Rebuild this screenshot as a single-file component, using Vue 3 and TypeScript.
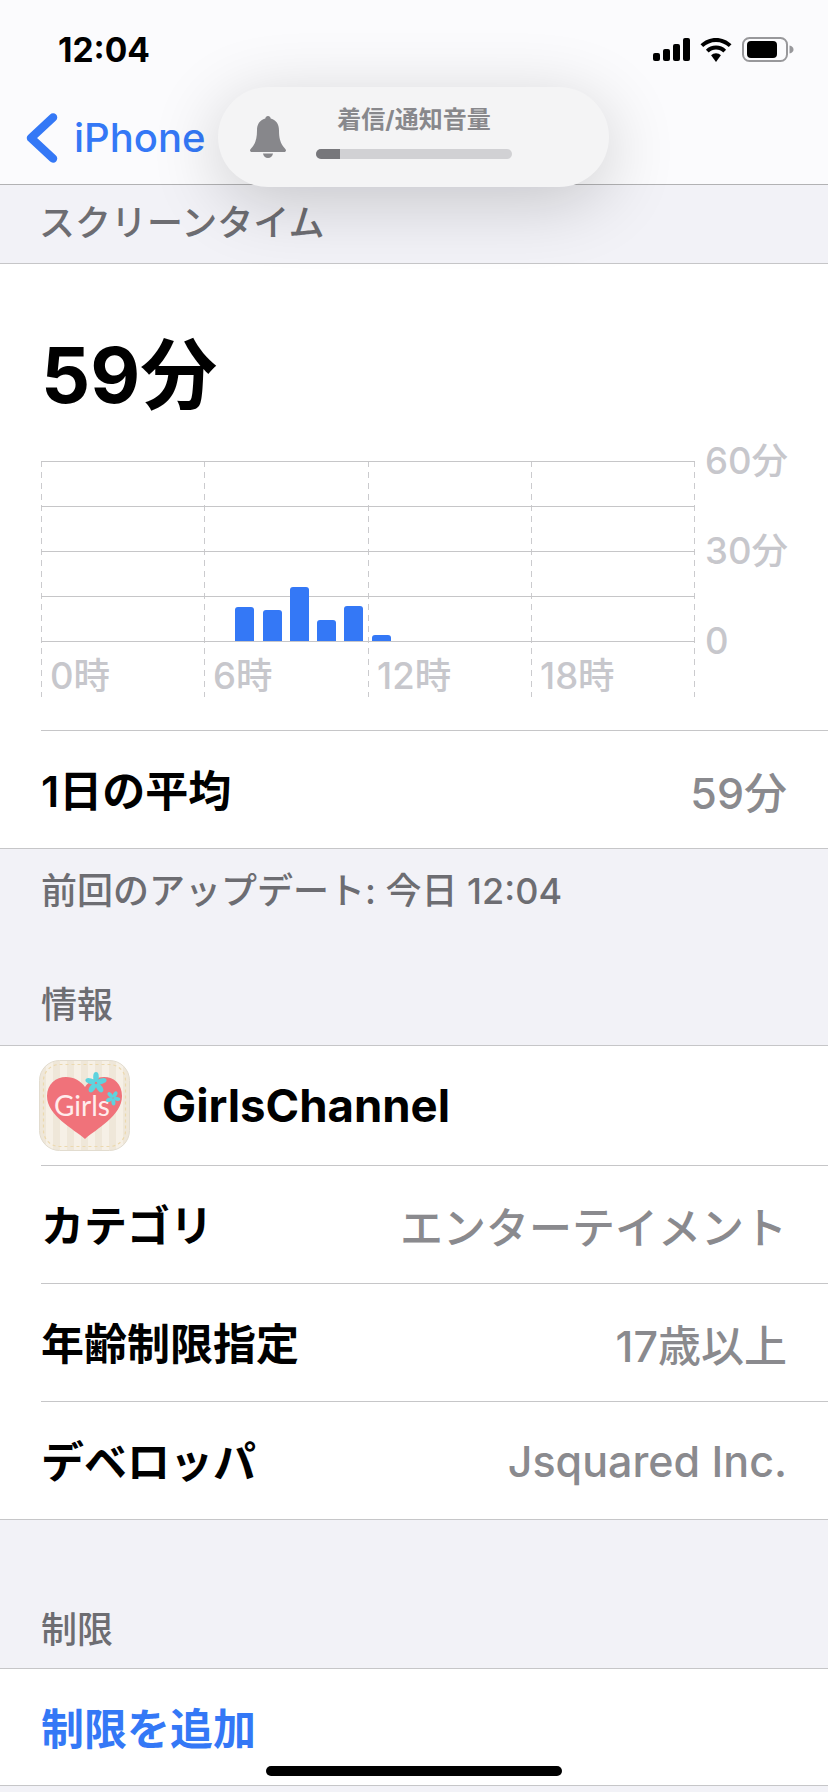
<script setup lang="ts">
const hours = ['0時', '6時', '12時', '18時']
const axis = ['60分', '30分', '0']
const gridY = [0.5, 45.5, 90.5, 135.5, 180.5]
const gridX = [0.5, 163.5, 327.5, 490.5, 653.5]
const bars = [
  { x: 194, top: 607 },
  { x: 222, top: 610 },
  { x: 249, top: 587 },
  { x: 276, top: 620 },
  { x: 303, top: 606 },
  { x: 331, top: 635 },
].map((b) => ({ x: b.x, y: b.top - 461, h: 641 - b.top }))

const infoRows = [
  { label: 'カテゴリ', value: 'エンターテイメント' },
  { label: '年齢制限指定', value: '17歳以上' },
  { label: 'デベロッパ', value: 'Jsquared Inc.' },
]
const barPath = (b: { x: number; y: number; h: number }) => {
  const r = Math.min(3, b.h)
  return `M${b.x} ${b.y + b.h}V${b.y + r}q0 -${r} ${r} -${r}h13q${r} 0 ${r} ${r}V${b.y + b.h}z`
}
</script>

<template>
  <div class="screen">
    <header class="top">
      <div class="status">
        <span class="time">12:04</span>
        <div class="status-icons">
          <svg width="37" height="23" viewBox="0 0 37 23">
            <rect x="0" y="15" width="7" height="8" rx="2" />
            <rect x="10" y="11" width="7" height="12" rx="2" />
            <rect x="20" y="6" width="7" height="17" rx="2" />
            <rect x="30" y="0" width="7" height="23" rx="2" />
          </svg>
          <svg width="32" height="24" viewBox="0 0 32 24">
            <path d="M16 0C10 0 4.600 2.400 0.500 6.300L3.200 9.100C6.600 5.900 11 3.900 16 3.900S25.400 5.900 28.800 9.100L31.500 6.300C27.400 2.400 22 0 16 0Z" />
            <path d="M16 7.600C12.100 7.600 8.600 9.100 5.900 11.700L8.700 14.500C10.600 12.700 13.200 11.600 16 11.600S21.400 12.700 23.300 14.500L26.100 11.700C23.400 9.100 19.900 7.600 16 7.600Z" />
            <path d="M16 15.200C14.100 15.200 12.400 15.900 11.100 17.200L16 24L20.900 17.200C19.600 15.900 17.900 15.200 16 15.200Z" />
          </svg>
          <svg width="52" height="25" viewBox="0 0 52 25">
            <rect x="1" y="1" width="44" height="23" rx="6.500" fill="none" stroke="#98989b" stroke-width="2" />
            <rect x="5" y="4" width="30" height="17" rx="4" />
            <path d="M47.500 8.500c2.500 .6 4 2 4 4s-1.500 3.400-4 4z" fill="#98989b" />
          </svg>
        </div>
      </div>
      <nav class="nav">
        <svg class="chevron" width="34" height="50" viewBox="0 0 34 50">
          <path d="M28 4.500L6 25L28 45.500" fill="none" stroke="#3478f6" stroke-width="8.500" stroke-linecap="round" stroke-linejoin="round" />
        </svg>
        <span class="back">iPhone</span>
      </nav>
    </header>

    <div class="hud">
      <svg class="bell" width="36" height="42" viewBox="0 0 36 42">
        <path d="M18 0c1.500 0 2.500 1 2.700 2.600C26.500 4 29 8.800 29 14.500c0 7 1.200 11.500 3.700 15.200 1.500 2.200 3.300 3.600 3.300 4.800 0 .9-.8 1.500-1.900 1.500H1.900C.8 36 0 35.400 0 34.500c0-1.200 1.800-2.600 3.300-4.800C5.800 26 7 21.500 7 14.500 7 8.800 9.500 4 15.300 2.600 15.500 1 16.500 0 18 0zM13 37.500h10c-.3 2.600-2.400 4.500-5 4.500s-4.700-1.900-5-4.500z" fill="#87878b" />
      </svg>
      <div class="hud-body">
        <span class="hud-title">着信/通知音量</span>
        <div class="hud-track"><div class="hud-fill"></div></div>
      </div>
    </div>

    <div class="band title-band"><span class="kana">スクリーンタイム</span></div>

    <section class="usage">
      <div class="total">59分</div>
      <div class="chart">
        <div class="plot">
          <svg class="plot-svg" width="654" height="236" viewBox="0 0 654 236">
            <line v-for="x in gridX" :key="x" :x1="x" :x2="x" y1="0" y2="236" stroke="#cbcbce" stroke-width="1" stroke-dasharray="6 5" />
            <line v-for="y in gridY" :key="y" x1="0" x2="654" :y1="y" :y2="y" stroke="#c6c6c8" stroke-width="1" />
            <path v-for="b in bars" :key="b.x" :d="barPath(b)" fill="#3478f6" />
          </svg>
          <div class="hours">
            <span v-for="h in hours" :key="h" class="hour">{{ h }}</span>
          </div>
        </div>
        <div class="axis">
          <span v-for="a in axis" :key="a">{{ a }}</span>
        </div>
      </div>
      <div class="row avg">
        <span class="label">1日の平均</span>
        <span class="value">59分</span>
      </div>
    </section>

    <div class="band updated">
      <span>前回のアップデート: 今日 12:04</span>
      <span class="info-title">情報</span>
    </div>

    <section class="list">
      <div class="row app">
        <svg class="app-icon" width="91" height="91" viewBox="0 0 91 91">
          <defs>
            <pattern id="stripes" width="14" height="10" patternUnits="userSpaceOnUse">
              <rect width="14" height="10" fill="#f6f0e6" />
              <rect width="7" height="10" fill="#efe7d9" />
            </pattern>
          </defs>
          <rect x="0.500" y="0.500" width="90" height="90" rx="20" fill="url(#stripes)" stroke="#e2dccf" />
          <rect x="4.500" y="4.500" width="82" height="82" rx="16" fill="none" stroke="#ecd9ae" stroke-width="1.200" stroke-dasharray="3 3" />
          <path d="M46 79C35 69 8 56 8 36C8 24 17 17 27 17C35 17 42 21 46 27C50 21 57 17 65 17C75 17 83 24 83 36C83 56 57 69 46 79Z" fill="#f0727a" />
          <text x="43" y="56" text-anchor="middle" class="girls">Girls</text>
          <g fill="#5ed3de">
            <ellipse v-for="r in [0, 72, 144, 216, 288]" :key="r" cx="57" cy="17" rx="2.800" ry="5" :transform="`rotate(${r} 57 23)`" />
            <ellipse v-for="r in [30, 102, 174, 246, 318]" :key="r" cx="74" cy="34" rx="2" ry="3.500" :transform="`rotate(${r} 74 38)`" />
          </g>
        </svg>
        <span class="app-name">GirlsChannel</span>
      </div>
      <div v-for="item in infoRows" :key="item.label" class="row">
        <span class="label">{{ item.label }}</span>
        <span class="value">{{ item.value }}</span>
      </div>
    </section>

    <div class="band limit-band">制限</div>

    <section class="list">
      <div class="row add">
        <span class="add-link">制限を追加</span>
      </div>
    </section>

    <div class="home"></div>
  </div>
</template>

<style scoped>
.screen {
  position: relative;
  width: 828px;
  height: 1792px;
  overflow: hidden;
  background: #f2f2f7;
  color: #000;
  font-family: Inter, "Noto Sans CJK JP", sans-serif;
}
.top {
  height: 184px;
  background: #fbfbfd;
  border-bottom: 1px solid #b2b2b4;
}
.status {
  height: 88px;
  padding: 30px 34px 0 58px;
  box-sizing: border-box;
  display: flex;
  justify-content: space-between;
  align-items: flex-start;
}
.time {
  font-size: 33.500px;
  line-height: 40px;
  font-weight: 700;
}
.status-icons {
  display: flex;
  align-items: center;
  gap: 10px;
  padding-top: 7px;
}
.nav {
  display: flex;
  align-items: center;
  height: 100px;
  padding: 0 0 0 25px;
  box-sizing: border-box;
}
.back {
  margin-left: 15px;
  font-size: 40px;
  font-weight: 500;
  color: #3478f6;
  line-height: 98px;
}
.hud {
  position: absolute;
  left: 218px;
  top: 87px;
  width: 391px;
  height: 100px;
  border-radius: 50px;
  background: #f4f4f5;
  box-shadow: 0 14px 70px rgba(0, 0, 0, 0.19);
  display: flex;
  align-items: flex-start;
}
.bell {
  margin: 29px 0 0 32px;
}
.hud-body {
  margin-left: 30px;
  width: 196px;
  display: flex;
  flex-direction: column;
  align-items: center;
}
.hud-title {
  margin-top: 17px;
  font-size: 24px;
  line-height: 32px;
  font-weight: 700;
  color: #88888c;
}
.hud-track {
  margin-top: 13px;
  width: 196px;
  height: 10px;
  border-radius: 5px;
  overflow: hidden;
  background: #d1d1d4;
}
.hud-fill {
  width: 24px;
  height: 100%;
  background: #77777b;
}
.band {
  padding: 0 41px;
  color: #6d6d72;
  font-size: 36px;
  font-weight: 500;
}
.title-band {
  height: 78px;
  line-height: 76px;
  border-bottom: 1px solid #c6c6c8;
}
.kana {
  margin-left: -2px;
}
.usage {
  background: #fff;
  padding-left: 41px;
  border-bottom: 1px solid #c6c6c8;
}
.total {
  padding-top: 66px;
  padding-bottom: 41px;
  font-size: 77px;
  line-height: 90px;
  font-weight: 700;
}
.chart {
  display: flex;
  height: 236px;
  margin-bottom: 33px;
}
.plot {
  width: 654px;
  display: grid;
}
.plot-svg,
.hours {
  grid-area: 1 / 1;
}
.plot-svg {
  display: block;
}
.hours {
  display: grid;
  grid-template-columns: 163px 164px 163px 164px;
  align-items: end;
  padding-bottom: 1px;
}
.hour {
  padding-left: 9px;
  font-size: 36.500px;
  line-height: 40px;
  font-weight: 500;
  color: #c7c7cc;
}
.axis {
  margin: -20px 0 0 10px;
  display: flex;
  flex-direction: column;
  gap: 50px;
  font-size: 36.500px;
  line-height: 40px;
  font-weight: 500;
  color: #c7c7cc;
}
.row {
  display: flex;
  align-items: center;
  justify-content: space-between;
  height: 117px;
  padding-right: 41px;
  border-bottom: 1px solid #c6c6c8;
}
.avg {
  border-top: 1px solid #c6c6c8;
  border-bottom: 0;
}
.label {
  padding-bottom: 3px;
  font-size: 43px;
  font-weight: 600;
}
.value {
  font-size: 43px;
  font-weight: 500;
  color: #8a8a8e;
}
.updated {
  height: 196px;
  display: flex;
  flex-direction: column;
  border-bottom: 1px solid #c6c6c8;
}
.updated span:first-child {
  margin-top: 20px;
  line-height: 44px;
}
.info-title {
  margin-top: 70px;
  line-height: 44px;
}
.list {
  background: #fff;
  padding-left: 41px;
  border-bottom: 1px solid #c6c6c8;
}
.list .row:last-child {
  border-bottom: 0;
}
.app {
  justify-content: flex-start;
  height: 119px;
}
.app-icon {
  margin-left: -2px;
  flex: none;
}
.girls {
  font-family: "Lato", sans-serif;
  font-size: 28px;
  font-weight: 400;
  fill: #ffecec;
}
.app-name {
  margin-left: 32px;
  font-size: 45.500px;
  font-weight: 700;
}
.limit-band {
  height: 149px;
  box-sizing: border-box;
  padding-top: 86px;
  line-height: 48px;
  border-bottom: 1px solid #c6c6c8;
}
.add {
  height: 116px;
}
.add-link {
  padding-bottom: 3px;
  font-size: 43px;
  font-weight: 600;
  color: #3478f6;
}
.home {
  position: absolute;
  left: 266px;
  top: 1766px;
  width: 296px;
  height: 10px;
  border-radius: 5px;
  background: #000;
}
</style>

<style>
html,
body {
  margin: 0;
  background: #f2f2f7;
}
</style>
